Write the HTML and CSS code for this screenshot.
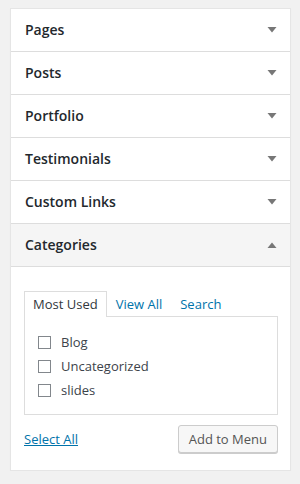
FILE: index.html
```html
<!DOCTYPE html>
<html lang="en">
<head>
    <meta charset="UTF-8">
    <meta name="viewport" content="width=device-width, initial-scale=1.0">
    <title>Menu items</title>
    <link rel="stylesheet" href="styles.css">
</head>
<body>

<div class="accordion">
    <div class="section">
        <h3 class="section-title">Pages
            <svg class="arrow" width="10" height="6" viewBox="0 0 10 6"><polygon points="0.5,0 9.5,0 5,5.5"/></svg>
        </h3>
    </div>
    <div class="section">
        <h3 class="section-title">Posts
            <svg class="arrow" width="10" height="6" viewBox="0 0 10 6"><polygon points="0.5,0 9.5,0 5,5.5"/></svg>
        </h3>
    </div>
    <div class="section">
        <h3 class="section-title">Portfolio
            <svg class="arrow" width="10" height="6" viewBox="0 0 10 6"><polygon points="0.5,0 9.5,0 5,5.5"/></svg>
        </h3>
    </div>
    <div class="section">
        <h3 class="section-title">Testimonials
            <svg class="arrow" width="10" height="6" viewBox="0 0 10 6"><polygon points="0.5,0 9.5,0 5,5.5"/></svg>
        </h3>
    </div>
    <div class="section">
        <h3 class="section-title">Custom Links
            <svg class="arrow" width="10" height="6" viewBox="0 0 10 6"><polygon points="0.5,0 9.5,0 5,5.5"/></svg>
        </h3>
    </div>
    <div class="section open">
        <h3 class="section-title">Categories
            <svg class="arrow" width="10" height="6" viewBox="0 0 10 6"><polygon points="0.5,6 9.5,6 5,0.5"/></svg>
        </h3>
        <div class="section-content">
            <ul class="tabs">
                <li class="tab active">Most Used</li>
                <li class="tab"><a href="#">View All</a></li>
                <li class="tab"><a href="#">Search</a></li>
            </ul>
            <div class="tabs-panel">
                <label class="item"><input type="checkbox"> Blog</label>
                <label class="item"><input type="checkbox"> Uncategorized</label>
                <label class="item"><input type="checkbox"> slides</label>
            </div>
            <div class="actions">
                <a href="#" class="select-all">Select All</a>
                <button type="button" class="button">Add to Menu</button>
            </div>
        </div>
    </div>
</div>

</body>
</html>
```

FILE: styles.css
```css
body {
    font-family: "Open Sans", Arial, sans-serif;
    background-color: #f1f1f1;
    margin: 0;
    padding: 0;
    color: #32373c;
}
.accordion {
    margin: 8px 9px 0 10px;
    background-color: white;
    border: 1px solid #e5e5e5;
    box-shadow: 0 1px 1px rgba(0,0,0,0.04);
}
.section {
    border-bottom: 1px solid #ddd;
}
.section:last-child {
    border-bottom: none;
}
.section-title {
    display: flex;
    justify-content: space-between;
    align-items: center;
    margin: 0;
    padding: 10px 13px 11px 14px;
    font-size: 14px;
    font-weight: 600;
    line-height: 21px;
    color: #23282d;
}
.open .section-title {
    background-color: #f5f5f5;
    border-bottom: 1px solid #ddd;
}
.arrow {
    fill: #777;
}
.section-content {
    padding: 24px 12px 17px 13px;
}
.tabs {
    display: flex;
    list-style: none;
    margin: 0;
    padding: 0;
    font-size: 13px;
    line-height: 18px;
}
.tab {
    padding: 3px 8px 3px;
    border: 1px solid transparent;
    border-bottom: none;
}
.tab a {
    color: #0073aa;
    text-decoration: none;
}
.tab.active {
    border-color: #ddd;
    background-color: white;
    position: relative;
    margin-bottom: -1px;
    padding-bottom: 4px;
}
.tabs-panel {
    border: 1px solid #ddd;
    padding: 13px 12px 12px 13px;
    display: flex;
    flex-direction: column;
}
.item {
    display: flex;
    align-items: center;
    gap: 10px;
    height: 24px;
    font-size: 13px;
    color: #3c434a;
}
.item input {
    appearance: none;
    width: 13px;
    height: 13px;
    margin: 0;
    border: 1px solid #82878c;
    background: white;
}
.actions {
    display: flex;
    justify-content: space-between;
    align-items: center;
    margin-top: 10px;
}
.select-all {
    font-size: 13px;
    color: #0073aa;
    text-decoration: underline;
}
.button {
    height: 28px;
    padding: 0 10px 1px;
    font-family: "Open Sans", Arial, sans-serif;
    font-size: 13px;
    line-height: 26px;
    color: #555;
    background-color: #f7f7f7;
    border: 1px solid #ccc;
    border-radius: 3px;
    box-shadow: 0 1px 0 #ccc;
    cursor: pointer;
}
```
